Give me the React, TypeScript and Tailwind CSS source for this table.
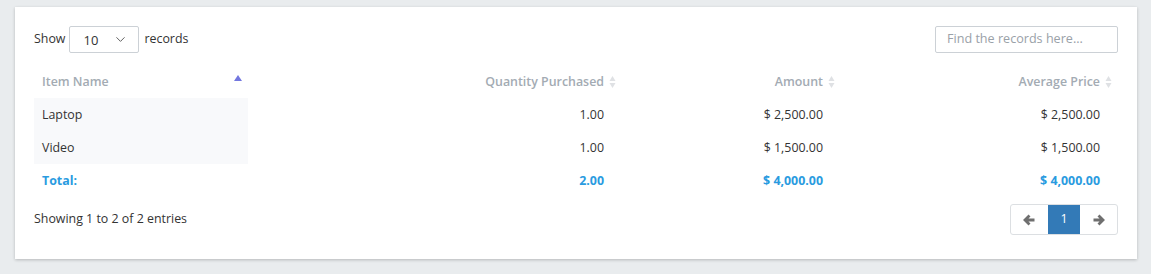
import { ChevronDown } from 'lucide-react';

interface Row {
  name: string
  qty: string
  amount: string
  avg: string
}

const rows: Row[] = [
  { name: 'Laptop', qty: '1.00', amount: '$ 2,500.00', avg: '$ 2,500.00' },
  { name: 'Video', qty: '1.00', amount: '$ 1,500.00', avg: '$ 1,500.00' },
];

function SortBoth() {
  return (
    <svg width="7" height="14" viewBox="0 0 7 14" className="absolute right-[6px] top-1/2 -translate-y-1/2">
      <path d="M3.5 1 L6.5 6 L0.5 6 Z" fill="#dfe1e4" />
      <path d="M3.5 13 L6.5 8 L0.5 8 Z" fill="#dfe1e4" />
    </svg>
  );
}

function ArrowLeft() {
  return (
    <svg width="13" height="12" viewBox="0 0 13 12">
      <path d="M6.5 1.5 L2 6 L6.5 10.5 M2.5 6 H11.5" stroke="#6f6f6f" strokeWidth="2.8" fill="none" strokeLinejoin="miter" />
    </svg>
  );
}

function ArrowRight() {
  return (
    <svg width="13" height="12" viewBox="0 0 13 12">
      <path d="M6.5 1.5 L11 6 L6.5 10.5 M10.5 6 H1.5" stroke="#6f6f6f" strokeWidth="2.8" fill="none" strokeLinejoin="miter" />
    </svg>
  );
}

export default function App() {
  return (
    <div className="w-[1151px] h-[274px] bg-[#e9ecee] pt-[7px] pl-[15px] font-['Open_Sans',sans-serif] text-[12.4px] text-[#333]">
      <div className="w-[1122px] h-[252px] bg-white shadow-[0_1px_3px_rgba(0,0,0,0.22)] px-[19px] pt-[19px]">
        <div className="flex items-center justify-between">
          <div className="flex items-center">
            <span>Show</span>
            <div className="ml-[4px] mr-[5px] w-[70px] h-[27px] border border-[#ccd1d6] rounded-[2px] flex items-center justify-between pl-[13px] pr-[10px] text-[13px]">
              <span className="mt-[2px]">10</span>
              <ChevronDown size={15} strokeWidth={1.5} color="#555" />
            </div>
            <span>records</span>
          </div>
          <div className="w-[183px] h-[27px] border border-[#ccd1d6] rounded-[2px] flex items-center pl-[11px] text-[#9aa1a8] text-[12.6px]">
            Find the records here...
          </div>
        </div>

        <table className="mt-[13px] w-[1084px] border-collapse table-fixed">
          <colgroup>
            <col className="w-[214px]" />
            <col className="w-[374px]" />
            <col className="w-[219px]" />
            <col className="w-[277px]" />
          </colgroup>
          <thead>
            <tr className="h-[32px] text-[#a3abb3] font-semibold">
              <th className="relative text-left pl-[8px] font-semibold">
                Item Name
                <svg width="8" height="6" viewBox="0 0 8 6" className="absolute right-[6px] top-[9px]">
                  <path d="M4 0 L8 6 L0 6 Z" fill="#7377df" />
                </svg>
              </th>
              <th className="relative text-right pr-[18px] font-semibold">
                Quantity Purchased
                <SortBoth />
              </th>
              <th className="relative text-right pr-[18px] font-semibold">
                Amount
                <SortBoth />
              </th>
              <th className="relative text-right pr-[18px] font-semibold">
                Average Price
                <SortBoth />
              </th>
            </tr>
          </thead>
          <tbody>
            {rows.map((r) => (
              <tr key={r.name} className="h-[33px]">
                <td className="bg-[#f8f9fb] pl-[8px] pt-[1px]">{r.name}</td>
                <td className="text-right pr-[18px] pt-[1px]">{r.qty}</td>
                <td className="text-right pr-[18px] pt-[1px]">{r.amount}</td>
                <td className="text-right pr-[18px] pt-[1px]">{r.avg}</td>
              </tr>
            ))}
            <tr className="h-[32px] text-[#2a9be0] font-bold">
              <td className="pl-[8px] pt-[2px]">Total:</td>
              <td className="text-right pr-[18px] pt-[2px]">2.00</td>
              <td className="text-right pr-[18px] pt-[2px]">$ 4,000.00</td>
              <td className="text-right pr-[18px] pt-[2px]">$ 4,000.00</td>
            </tr>
          </tbody>
        </table>

        <div className="mt-[8px] flex items-start justify-between">
          <span className="mt-[6px]">Showing 1 to 2 of 2 entries</span>
          <div className="flex h-[31px] border border-[#dcdfe2] rounded-[3px] overflow-hidden">
            <div className="w-[37px] flex items-center justify-center">
              <ArrowLeft />
            </div>
            <div className="w-[32px] bg-[#337ab7] text-white flex items-center justify-center">1</div>
            <div className="w-[37px] flex items-center justify-center">
              <ArrowRight />
            </div>
          </div>
        </div>
      </div>
    </div>
  );
}
